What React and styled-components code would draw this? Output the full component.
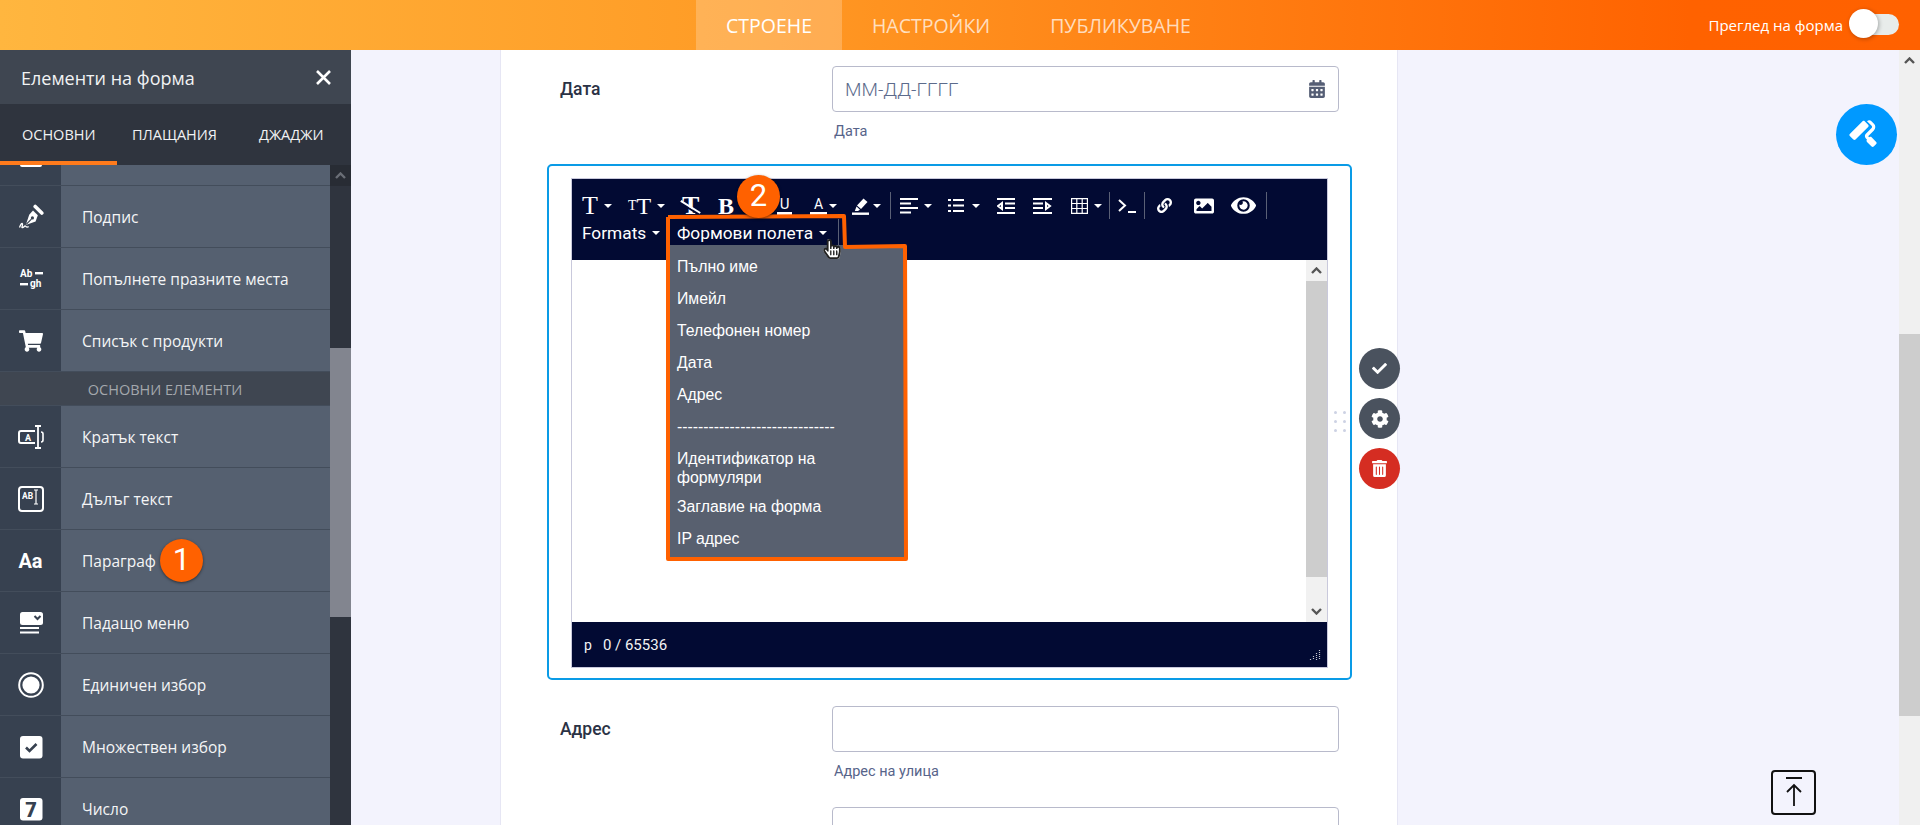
import React from "react";
import styled, { createGlobalStyle } from "styled-components";
import {
  FaShoppingCart, FaCalendarAlt, FaCheck, FaCog, FaTrashAlt, FaPaintRoller,
  FaLink, FaImage, FaEye, FaHandPointer, FaRegHandPointer,
} from "react-icons/fa";

const Global = createGlobalStyle`
  html, body { margin: 0; padding: 0; overflow: hidden; }
  * { box-sizing: border-box; }
  body { font-family: "Roboto", "Liberation Sans", sans-serif; }
`;

const UI_FONT = `"Open Sans", "Noto Sans", sans-serif`;

const Page = styled.div`
  width: 1920px; height: 825px; display: flex; flex-direction: column; overflow: hidden;
`;
const TopBar = styled.header`
  height: 50px; flex: none; display: flex; align-items: stretch; position: relative;
  padding-left: 696px;
  background: linear-gradient(90deg, #ffb63f 0%, #ff9c26 38%, #ff6200 88%, #ff6100 100%);
  font-family: ${UI_FONT};
`;
const TopTab = styled.div`
  padding: 0 30px; display: flex; align-items: center; font-size: 19.5px; letter-spacing: 0;
  color: ${p => (p.$active ? "#fff" : "rgba(255,255,255,.72)")};
  background: ${p => (p.$active ? "rgba(255,255,255,.22)" : "transparent")};
`;
const PreviewBox = styled.div`
  margin-left: auto; display: flex; align-items: center; color: #fff; font-size: 15px;
  padding-right: 21px;
`;
const Toggle = styled.div`
  width: 49px; height: 21px; border-radius: 11px; background: #e8eceb; margin-left: 7px;
  position: relative; margin-top: -1px;
`;
const Knob = styled.div`
  position: absolute; left: -1px; top: -5px; width: 29px; height: 29px; border-radius: 50%;
  background: #fff; box-shadow: 1px 1px 4px rgba(0,0,0,.3);
`;
const Body = styled.div`
  flex: 1; display: flex; min-height: 0;
`;
const Sidebar = styled.aside`
  width: 351px; flex: none; display: flex; flex-direction: column; background: #2f343e;
  font-family: ${UI_FONT}; color: #fff;
`;
const SideHeader = styled.div`
  height: 54px; flex: none; display: flex; align-items: center; justify-content: space-between;
  padding: 3px 19px 2px 21px; background: #3f4651; font-size: 18px; color: #f2f3f4;
`;
const SideTabs = styled.div`
  height: 61px; flex: none; display: flex; background: #2f343e; font-size: 14.5px;
`;
const SideTab = styled.div`
  width: ${p => p.$w}px; padding-top: 21px; padding-left: ${p => p.$pl}px; color: #f1f2f3;
  border-bottom: 4px solid ${p => (p.$active ? "#ff7b1c" : "transparent")};
  white-space: nowrap;
`;
const SideBody = styled.div`
  flex: 1; display: flex; min-height: 0; overflow: hidden;
`;
const SideList = styled.div`
  width: 330px; flex: none; display: flex; flex-direction: column;
`;
const SideRow = styled.div`
  height: ${p => p.$h || 62}px; flex: none; display: flex; border-bottom: 1px solid #434d5b;
  background: #556070; position: relative;
`;
const SideIcon = styled.div`
  width: 61px; flex: none; background: #374150; display: flex;
  align-items: ${p => (p.$top ? "flex-start" : "center")};
  justify-content: center; color: #fff; overflow: hidden;
`;
const ClippedGlyph = styled.div`
  width: 22px; height: 2px; background: #fff; border-radius: 0 0 2px 2px;
`;
const SideLabel = styled.div`
  padding-left: 21px; display: flex; align-items: center; font-size: 15.5px; color: #f4f5f6;
  padding-top: 1px;
`;
const GroupHead = styled.div`
  height: 34px; flex: none; background: #3f4651; display: flex; align-items: center;
  justify-content: center; font-size: 14.5px; color: #a4a8ad; border-bottom: 1px solid #434d5b;
  padding-top: 1px;
`;
const SideScroll = styled.div`
  flex: 1; background: #2f343e; display: flex; flex-direction: column;
`;
const SideUp = styled.div`
  height: 21px; flex: none; background: #282c34; display: flex; align-items: center; justify-content: center;
`;
const SideThumb = styled.div`
  margin-top: 162px; height: 269px; background: #82858f;
`;
const Badge = styled.div`
  position: absolute; width: 43px; height: 43px; border-radius: 50%; background: #ff6100;
  color: #fff; font-family: "Roboto", sans-serif; font-size: 31px; display: flex;
  align-items: center; justify-content: center; box-shadow: 0 1px 3px rgba(0,0,0,.5);
  left: ${p => p.$x}px; top: ${p => p.$y}px; z-index: 5; padding-bottom: 3px;
`;
const Canvas = styled.main`
  flex: 1; min-width: 0; position: relative; overflow: hidden; background: #f3f3fd;
`;
const Card = styled.div`
  margin-left: 149px; width: 898px; height: 100%; background: #fff;
  border-left: 1px solid #e6e6f4; border-right: 1px solid #e6e6f4; padding-top: 16px;
`;
const FieldRow = styled.div`
  display: grid; grid-template-columns: 272px 507px; padding-left: 59px;
  margin-top: ${p => p.$mt || 0}px;
`;
const FieldLabel = styled.div`
  font-size: 17.5px; font-weight: 500; color: #2b3245; padding-top: 13px;
`;
const InputBox = styled.div`
  height: 46px; border: 1px solid #b8bacb; border-radius: 4px; background: #fff;
  display: flex; align-items: center; justify-content: space-between; padding: 0 12px 0 12px;
  color: #5c6b8c; font-size: 19px; font-weight: 300;
`;
const SubLabel = styled.div`
  font-size: 14.5px; color: #57648a; margin-top: 12px; height: 15px; line-height: 16px; padding-left: 2px;
`;
const Selected = styled.section`
  margin: 25px 0 0 46px; width: 805px; height: 516px; border: 2px solid #0a9be6; border-radius: 5px;
  background: #fff; padding: 12px 0 0 22px; position: relative;
`;
const Editor = styled.div`
  width: 757px; height: 490px; border: 1px solid #c9c9dc; display: flex; flex-direction: column;
  position: relative; background: #fff;
`;
const Toolbar = styled.div`
  height: 81px; flex: none; background: #020a33; color: #fff; padding-top: 13px;
`;
const ToolRow = styled.div`
  height: 27px; display: flex; align-items: center; padding-left: 10px;
`;
const Tool = styled.div`
  width: ${p => p.$w}px; flex: none; display: flex; align-items: center; height: 27px;
  gap: ${p => p.$gap ?? 6}px; color: #fff;
`;
const Sep = styled.div`
  width: ${p => p.$w}px; flex: none; height: 27px; border-left: 1px solid #5a6076;
`;
const Caret = styled.span`
  width: 0; height: 0; border-left: 4px solid transparent; border-right: 4px solid transparent;
  border-top: 4.5px solid #fff; display: inline-block; flex: none;
`;
const SerifT = styled.span`
  font-family: "Liberation Serif", serif; font-size: ${p => p.$s}px; line-height: 1; font-weight: ${p => p.$b || 400};
  color: #fff; position: relative; margin-left: ${p => p.$ml || 0}px;
`;
const MenuText = styled.span`
  font-size: 17.3px; color: #fff;
`;
const Strike = styled.span`
  position: absolute; left: -3px; right: -3px; top: 50%; height: 2px; background: #fff; transform: rotate(32deg);
  box-shadow: 0 2px 0 #020a33;
`;
const Under = styled.span`
  display: inline-block; font-size: ${p => p.$s || 14}px; line-height: 14px; color: #fff; border-bottom: 3px solid #fff;
  width: ${p => p.$w}px; text-align: center; height: 18px; font-family: "Roboto", sans-serif;
`;
const EditArea = styled.div`
  flex: 1; display: flex; justify-content: flex-end; min-height: 0;
`;
const EditScroll = styled.div`
  width: 21px; height: 100%; background: #f1f1f1; display: flex; flex-direction: column;
`;
const ScrollBtn = styled.div`
  height: 21px; flex: none; display: flex; align-items: center; justify-content: center;
`;
const EditThumb = styled.div`
  height: 296px; background: #cdcdcd; flex: none;
`;
const Spacer = styled.div`flex: 1;`;
const StatusBar = styled.div`
  height: 45px; flex: none; background: #020a33; color: #f3f3f3; font-size: 15px; display: flex;
  align-items: center; padding-left: 12px; position: relative;
`;
const StatusP = styled.span`margin-right: 11px; font-size: 14px;`;
const Grip = styled.svg`
  position: absolute; right: 6px; bottom: 6px;
`;
const Menu = styled.div`
  position: absolute; left: 97px; top: 66px; width: 236px; height: 312px; background: #58606f;
  padding-top: 7px; font-family: "Liberation Sans", Arial, sans-serif; font-size: 15.8px; color: #fff; z-index: 2;
`;
const MenuItem = styled.div`
  min-height: 32px; padding: 5px 30px 5px 8px; line-height: 19px;
`;
const Outline = styled.svg`
  position: absolute; left: 92px; top: 34px; z-index: 3; pointer-events: none; overflow: visible;
`;
const Hand = styled.div`
  position: absolute; left: 250px; top: 60px; width: 18px; height: 20px; z-index: 4;
  & > svg { position: absolute; left: 0; top: 0; }
`;
const SideActions = styled.div`
  position: absolute; left: 810px; top: 182px; display: flex; flex-direction: column; gap: 9px;
`;
const Action = styled.div`
  width: 41px; height: 41px; border-radius: 50%; background: ${p => p.$bg}; color: #fff;
  display: flex; align-items: center; justify-content: center; font-size: 15px;
`;
const DragDots = styled.div`
  position: absolute; left: 785px; top: 245px; display: grid; grid-template-columns: 3px 3px;
  column-gap: 6px; row-gap: 6px;
  & > i { width: 3px; height: 3px; border-radius: 50%; background: #cdd2e4; display: block; }
`;
const PageScroll = styled.div`
  width: 21px; flex: none; background: #f0f0f0; display: flex; flex-direction: column;
`;
const PageThumb = styled.div`
  margin-top: 263px; height: 382px; background: #cdcdcd;
`;
const RollerBtn = styled.div`
  position: absolute; left: 1485px; top: 54px; width: 61px; height: 61px; border-radius: 50%;
  background: #0099ff; color: #fff; display: flex; align-items: center; justify-content: center;
`;
const ToTop = styled.div`
  position: absolute; left: 1420px; top: 720px; width: 45px; height: 45px; border: 2px solid #111;
  border-radius: 4px; display: flex; align-items: center; justify-content: center;
`;
const SmallText = styled.text`
  font-family: "Roboto", sans-serif; font-weight: 700; fill: #fff;
`;
const AaText = styled.span`
  font-family: "Roboto", sans-serif; font-weight: 700; font-size: 20px; color: #fff;
`;

const Chevron = ({ up = true, color = "#555", w = 11 }) => (
  <svg width={w} height={7} viewBox="0 0 11 7">
    <polyline points={up ? "1,6 5.5,1.5 10,6" : "1,1 5.5,5.5 10,1"} fill="none" stroke={color} strokeWidth="2.4" />
  </svg>
);

const IconPen = () => (
  <svg width="26" height="26" viewBox="0 0 26 26">
    <path d="M17.2 2.4l6.6 6.6" stroke="#fff" strokeWidth="3.6" strokeLinecap="round" />
    <path d="M15 6.5l4.8 4.8-2.2 6.3-9.8 3.4 3.4-10.3z" fill="#fff" />
    <path d="M8.2 20.4l5.2-5.2" stroke="#374150" strokeWidth="1.2" />
    <circle cx="14.4" cy="13.9" r="1.6" fill="#374150" />
    <path d="M1.5 23.5c1.5-4 2.6-5 3-3.4s-1.6 3.8.2 3.4 2-2.4 3-1.2 1.6 1 3 .4" fill="none" stroke="#fff" strokeWidth="1.3" />
  </svg>
);
const IconShort = () => (
  <svg width="26" height="24" viewBox="0 0 26 24">
    <rect x="1" y="6" width="19" height="12" rx="2" fill="none" stroke="#fff" strokeWidth="2" />
    <SmallText x="7" y="15.5" fontSize="9">A</SmallText>
    <rect x="17" y="2" width="7" height="20" fill="#374150" />
    <path d="M17 1h6M20 1v22M17 23h6" stroke="#fff" strokeWidth="1.8" fill="none" />
    <path d="M23 7c2 0 2 1 2 2v6c0 2-1 2-2 2" stroke="#fff" strokeWidth="1.6" fill="none" />
  </svg>
);
const IconLong = () => (
  <svg width="26" height="26" viewBox="0 0 26 26">
    <rect x="1" y="1" width="24" height="24" rx="3" fill="none" stroke="#fff" strokeWidth="2" />
    <SmallText x="4" y="13" fontSize="8.5">AB</SmallText>
    <path d="M16 4h4M18 4v14M16 18h4" stroke="#fff" strokeWidth="1.2" fill="none" />
  </svg>
);
const IconBlank = () => (
  <svg width="24" height="24" viewBox="0 0 24 24">
    <SmallText x="1" y="10" fontSize="10">Ab</SmallText>
    <rect x="16" y="5" width="8" height="2.4" fill="#fff" />
    <rect x="1" y="16" width="8" height="2.4" fill="#fff" />
    <SmallText x="11" y="20" fontSize="10">gh</SmallText>
  </svg>
);
const IconDrop = () => (
  <svg width="24" height="24" viewBox="0 0 24 24">
    <rect x="1" y="1" width="23" height="13" rx="2.5" fill="#fff" />
    <polyline points="15.5,5 18.5,8 21.5,5" fill="none" stroke="#374150" strokeWidth="2" />
    <rect x="1" y="16" width="19" height="2" fill="#fff" />
    <rect x="1" y="20.5" width="19" height="2" fill="#fff" />
  </svg>
);
const IconRadio = () => (
  <svg width="26" height="26" viewBox="0 0 26 26">
    <circle cx="13" cy="13" r="11.8" fill="none" stroke="#fff" strokeWidth="2" />
    <circle cx="13" cy="13" r="8.6" fill="#fff" />
  </svg>
);
const IconCheck = () => (
  <svg width="24" height="24" viewBox="0 0 24 24">
    <rect x="1" y="1" width="22.5" height="22.5" rx="3" fill="#fff" />
    <polyline points="7,12.5 10.5,16 17.5,9" fill="none" stroke="#374150" strokeWidth="2.6" />
  </svg>
);
const IconNumber = () => (
  <svg width="24" height="24" viewBox="0 0 24 24">
    <rect x="1" y="1" width="22.5" height="22.5" rx="3" fill="#fff" />
    <text x="12" y="20" textAnchor="middle" fontSize="20" fontWeight="900" fontFamily="Roboto, sans-serif" fill="#374150">7</text>
  </svg>
);
const IconX = () => (
  <svg width="17" height="17" viewBox="0 0 17 17">
    <path d="M2 2l13 13M15 2L2 15" stroke="#fff" strokeWidth="2.6" />
  </svg>
);
const Lines = ({ w, h, d, sw = 2 }) => (
  <svg width={w} height={h} viewBox={`0 0 ${w} ${h}`}>
    <path d={d} stroke="#fff" strokeWidth={sw} fill="none" />
  </svg>
);
const IconHighlighter = () => (
  <svg width="18" height="18" viewBox="0 0 18 18">
    <path d="M11.5 1.5l4 3.5-6.5 7-4-3.5z" fill="#fff" />
    <path d="M4.5 9.5l3.5 3.2-2 1.3H2.8z" fill="#fff" />
    <rect x="0" y="15.5" width="17" height="2.4" fill="#fff" />
  </svg>
);

const ROWS_A = [
  { icon: <IconPen />, label: "Подпис" },
  { icon: <IconBlank />, label: "Попълнете празните места" },
  { icon: <FaShoppingCart size={24} />, label: "Списък с продукти" },
];
const ROWS_B = [
  { icon: <IconShort />, label: "Кратък текст" },
  { icon: <IconLong />, label: "Дълъг текст" },
  { icon: <AaText>Aa</AaText>, label: "Параграф", badge: "1" },
  { icon: <IconDrop />, label: "Падащо меню" },
  { icon: <IconRadio />, label: "Единичен избор" },
  { icon: <IconCheck />, label: "Множествен избор" },
  { icon: <IconNumber />, label: "Число" },
];
const MENU = [
  "Пълно име", "Имейл", "Телефонен номер", "Дата", "Адрес",
  "------------------------------", "Идентификатор на формуляри", "Заглавие на форма", "IP адрес",
];

const Row = ({ item }) => (
  <SideRow>
    <SideIcon>{item.icon}</SideIcon>
    <SideLabel>{item.label}</SideLabel>
    {item.badge && <Badge $x={160} $y={9}>{item.badge}</Badge>}
  </SideRow>
);

export default function App() {
  return (
    <Page>
      <Global />
      <TopBar>
        <TopTab $active>СТРОЕНЕ</TopTab>
        <TopTab>НАСТРОЙКИ</TopTab>
        <TopTab>ПУБЛИКУВАНЕ</TopTab>
        <PreviewBox>
          Преглед на форма
          <Toggle><Knob /></Toggle>
        </PreviewBox>
      </TopBar>
      <Body>
        <Sidebar>
          <SideHeader>Елементи на форма<IconX /></SideHeader>
          <SideTabs>
            <SideTab $w={117} $pl={22} $active>ОСНОВНИ</SideTab>
            <SideTab $w={124} $pl={15}>ПЛАЩАНИЯ</SideTab>
            <SideTab $w={110} $pl={18}>ДЖАДЖИ</SideTab>
          </SideTabs>
          <SideBody>
            <SideList>
              <SideRow $h={21}>
                <SideIcon $top><ClippedGlyph /></SideIcon>
              </SideRow>
              {ROWS_A.map(r => <Row key={r.label} item={r} />)}
              <GroupHead>ОСНОВНИ ЕЛЕМЕНТИ</GroupHead>
              {ROWS_B.map(r => <Row key={r.label} item={r} />)}
            </SideList>
            <SideScroll>
              <SideUp><Chevron color="#6a6e76" /></SideUp>
              <SideThumb />
            </SideScroll>
          </SideBody>
        </Sidebar>
        <Canvas>
          <Card>
            <FieldRow>
              <FieldLabel>Дата</FieldLabel>
              <div>
                <InputBox>ММ-ДД-ГГГГ<FaCalendarAlt size={18} color="#555e75" /></InputBox>
                <SubLabel>Дата</SubLabel>
              </div>
            </FieldRow>
            <Selected>
              <Editor>
                <Toolbar>
                  <ToolRow>
                    <Tool $w={46}><SerifT $s={26}>T</SerifT><Caret /></Tool>
                    <Tool $w={54}><SerifT $s={14}>T</SerifT><SerifT $s={24} $ml={-6}>T</SerifT><Caret /></Tool>
                    <Tool $w={36}><SerifT $s={26} $b={700}>T<Strike /></SerifT></Tool>
                    <Tool $w={59}><SerifT $s={24} $b={700}>B</SerifT></Tool>
                    <Tool $w={33}><Under $w={15} $s={15}>U</Under></Tool>
                    <Tool $w={42} $gap={2}><Under $w={17}>A</Under><Caret /></Tool>
                    <Tool $w={38} $gap={3}><IconHighlighter /><Caret /></Tool>
                    <Sep $w={10} />
                    <Tool $w={48}><Lines w={18} h={16} d="M0 1h18M0 5.5h11M0 10h18M0 14.5h11" /><Caret /></Tool>
                    <Tool $w={49} $gap={8}><Lines w={16} h={15} d="M0 2h3M5 2h11M0 7.5h3M5 7.5h11M0 13h3M5 13h11" /><Caret /></Tool>
                    <Tool $w={36}><Lines w={18} h={16} d="M0 1h18M8 5.5h10M8 10h10M0 15h18M5 5L1 8l4 3z" /></Tool>
                    <Tool $w={38}><Lines w={19} h={16} d="M0 1h19M0 5.5h10M0 10h10M0 15h19M13 5l4 3-4 3z" /></Tool>
                    <Tool $w={38}><Lines w={17} h={16} sw={1.2} d="M.6.6h15.8v14.8H.6zM.6 5.5h15.8M.6 10.5h15.8M5.8.6v14.8M11.2.6v14.8" /><Caret /></Tool>
                    <Sep $w={9} />
                    <Tool $w={26}><Lines w={18} h={14} d="M1 1l6 5.5-6 5.5M10 13h8" /></Tool>
                    <Sep $w={13} />
                    <Tool $w={37}><FaLink size={15} /></Tool>
                    <Tool $w={37}><FaImage size={20} /></Tool>
                    <Tool $w={35}><FaEye size={25} /></Tool>
                    <Sep $w={1} />
                  </ToolRow>
                  <ToolRow>
                    <Tool $w={95}><MenuText>Formats</MenuText><Caret /></Tool>
                    <Tool $w={161}><MenuText>Формови полета</MenuText><Caret /></Tool>
                    <Sep $w={1} />
                  </ToolRow>
                </Toolbar>
                <EditArea>
                  <EditScroll>
                    <ScrollBtn><Chevron /></ScrollBtn>
                    <EditThumb />
                    <Spacer />
                    <ScrollBtn><Chevron up={false} /></ScrollBtn>
                  </EditScroll>
                </EditArea>
                <StatusBar>
                  <StatusP>p</StatusP>0 / 65536
                  <Grip width="12" height="12" viewBox="0 0 12 12">
                    <path d="M10.5 1v10M7.5 4v7M4.5 7v4M1.5 10v1" stroke="#c8c8d0" strokeWidth="1.2" strokeDasharray="1 1" />
                  </Grip>
                </StatusBar>
                <Menu>
                  {MENU.map(m => <MenuItem key={m}>{m}</MenuItem>)}
                </Menu>
                <Outline width="248" height="350" viewBox="0 0 248 350">
                  <polyline points="4,4 180,3 181,34 241,33 242,346 4,346 4,4" fill="none" stroke="#ff6100" strokeWidth="4" strokeLinejoin="round" />
                </Outline>
                <Hand>
                  <FaHandPointer size={20} color="#fff" />
                  <FaRegHandPointer size={20} color="#222" />
                </Hand>
                <Badge $x={165} $y={-4}>2</Badge>
              </Editor>
              <DragDots><i /><i /><i /><i /><i /><i /></DragDots>
              <SideActions>
                <Action $bg="#4a525e"><FaCheck /></Action>
                <Action $bg="#4a525e"><FaCog size={18} /></Action>
                <Action $bg="#d52d22"><FaTrashAlt size={17} /></Action>
              </SideActions>
            </Selected>
            <FieldRow $mt={26}>
              <FieldLabel>Адрес</FieldLabel>
              <div>
                <InputBox />
                <SubLabel>Адрес на улица</SubLabel>
              </div>
            </FieldRow>
            <FieldRow $mt={28}>
              <div />
              <InputBox />
            </FieldRow>
          </Card>
          <RollerBtn><FaPaintRoller size={26} style={{ transform: "rotate(-45deg)" }} /></RollerBtn>
          <ToTop>
            <svg width="24" height="32" viewBox="0 0 24 32">
              <path d="M4 1h16M12 29V8M5 15l7-7 7 7" fill="none" stroke="#111" strokeWidth="1.8" />
            </svg>
          </ToTop>
        </Canvas>
        <PageScroll>
          <ScrollBtn><Chevron /></ScrollBtn>
          <PageThumb />
        </PageScroll>
      </Body>
    </Page>
  );
}
